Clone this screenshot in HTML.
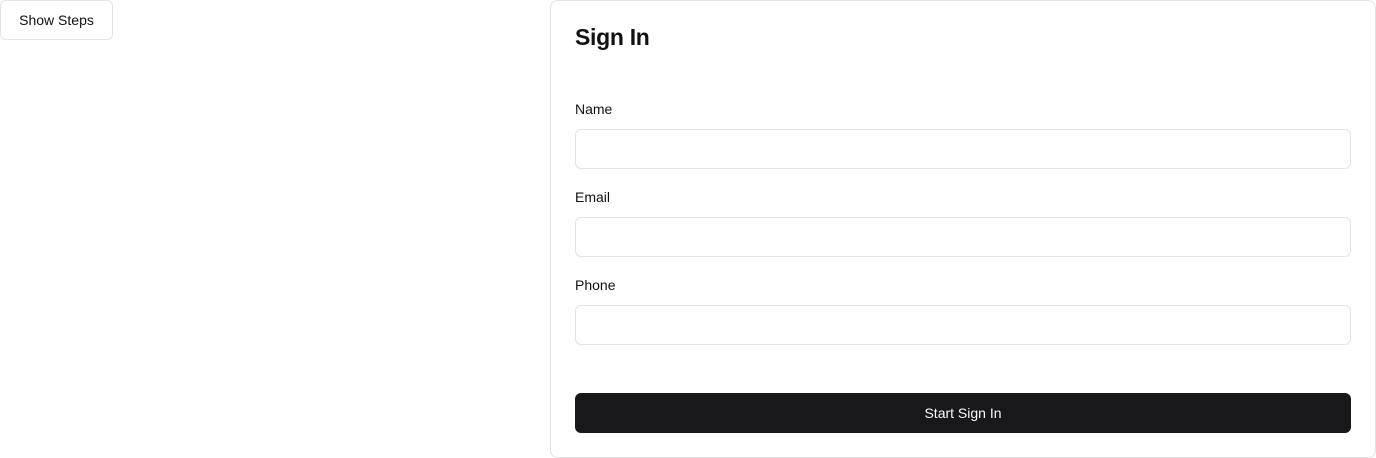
<!DOCTYPE html>
<html><head><meta charset="utf-8"><style>
*{box-sizing:border-box;margin:0;padding:0}
body{width:1376px;height:458px;background:#fff;font-family:"Liberation Sans",sans-serif;color:#111;position:relative;overflow:hidden}
.btn{position:absolute;left:0;top:0;width:113px;height:40px;border:1px solid #e4e4e7;border-radius:6px;font-size:14px;display:flex;align-items:center;justify-content:center;color:#111}
.card{position:absolute;left:550px;top:0;width:826px;height:458px;border:1px solid #e4e4e7;border-radius:8px}
h1{position:absolute;left:24px;top:23px;font-size:23px;font-weight:bold;letter-spacing:-0.3px}
.lbl{position:absolute;left:24px;font-size:14px;font-weight:500}
.in{position:absolute;left:24px;width:776px;height:40px;border:1px solid #e4e4e7;border-radius:6px}
.sub{position:absolute;left:24px;top:392px;width:776px;height:40px;background:#18181b;border-radius:6px;color:#fafafa;font-size:14px;display:flex;align-items:center;justify-content:center}
</style></head><body>
<div class="btn">Show Steps</div>
<div class="card">
<h1>Sign In</h1>
<div class="lbl" style="top:100px">Name</div>
<div class="in" style="top:128px"></div>
<div class="lbl" style="top:188px">Email</div>
<div class="in" style="top:216px"></div>
<div class="lbl" style="top:276px">Phone</div>
<div class="in" style="top:304px"></div>
<div class="sub">Start Sign In</div>
</div>
</body></html>
